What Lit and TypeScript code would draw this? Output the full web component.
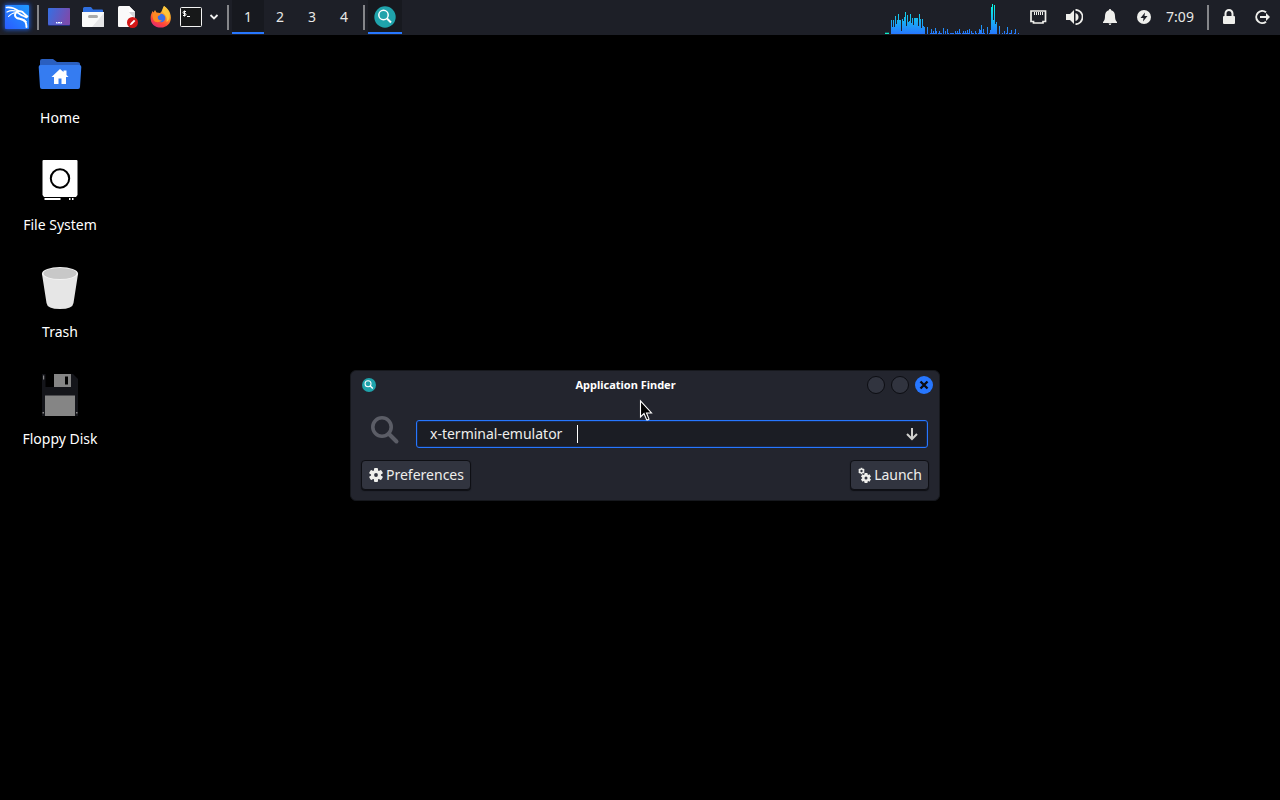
import { LitElement, html, svg, css } from "lit";
import { customElement, property } from "lit/decorators.js";

const icons: Record<string, unknown> = {
  kali: svg`<svg width="34" height="34" viewBox="0 0 34 34">
    <defs>
      <linearGradient id="k" x1="0" y1="1" x2="1" y2="0"><stop offset="0" stop-color="#2a5cff"/><stop offset="1" stop-color="#1f9bff"/></linearGradient>
      <filter id="g" x="-30%" y="-30%" width="160%" height="160%"><feGaussianBlur stdDeviation="2"/></filter>
    </defs>
    <rect x="4" y="4" width="26" height="26" rx="2" fill="#1c5fe8" opacity=".8" filter="url(#g)"/>
    <rect x="5" y="5" width="24" height="24" rx="1" fill="url(#k)"/>
    <g fill="none" stroke="#fff" stroke-linecap="round" stroke-linejoin="round">
      <path d="M6.500 7.500c4-.5 8 .5 12 3.500" stroke-width="1.700"/>
      <path d="M7 12c3-1.500 7-1.500 10-.5" stroke-width="1.300"/>
      <path d="M8.500 16.500c2-2.500 4-3.500 7.500-4" stroke-width="1.100"/>
      <path d="M17 11.500c3-1 6 0 7.500 2.500l3 2.500-1 1-3-1.500c-2-.5-4-2-6-3.500" stroke-width="1.700"/>
      <path d="M17 12c-2.500 1.500-3 4.500 0 6 3 1.200 6.500 1 8.500 4 .8 2 1 3.500 1 5" stroke-width="2"/>
      <path d="M19 18.500c4 .5 6 1 7.500 3" stroke-width="1"/>
    </g></svg>`,
  desktop: svg`<svg width="22" height="18" viewBox="0 0 22 18">
    <defs><linearGradient id="d" x1="0" y1="0" x2="1" y2=".3"><stop offset="0" stop-color="#3470e4"/><stop offset="1" stop-color="#7a4cae"/></linearGradient></defs>
    <rect width="22" height="18" rx="1" fill="#20307c"/><rect width="22" height="17" rx="1" fill="url(#d)"/>
    <path d="M8 14h6v2h-6z" fill="#8b9df2"/><path d="M8 14h1v1h-1zM10 14h2v1h-2zM13 14h1v1h-1z" fill="#fff"/></svg>`,
  files: svg`<svg width="22" height="20" viewBox="0 0 22 20">
    <path d="M1 5V1.500Q1 0 2.500 0H9l2 2.500h9q1 0 1 1V6H1z" fill="#2f6fe0"/>
    <path d="M0 5h22v14q0 1-1 1H1q-1 0-1-1z" fill="#fafafa"/><path d="M22 6v13q0 1-1 1H10z" fill="#e6e6e8"/>
    <rect x="6" y="8" width="10" height="3" rx="1.500" fill="#aaa"/></svg>`,
  editor: svg`<svg width="22" height="24" viewBox="-1 0 22 24">
    <path d="M1 2.500Q1 1 2.500 1H12l6 6v14q0 1-1 1H2q-1 0-1-1z" fill="#fafafa"/><path d="M12 1l6 6v7l-6-7z" fill="#d5d5d8"/><path d="M12 1l6 6h-6z" fill="#fff"/>
    <circle cx="15.500" cy="17.500" r="5.500" fill="#d41616"/><path d="M12.700 20.300l1-2.300 3.300-3.300 1.400 1.400-3.400 3.300z" fill="#fff"/></svg>`,
  firefox: svg`<svg width="22" height="22" viewBox="0 0 22 22">
    <defs><linearGradient id="f" x1=".8" y1="0" x2=".3" y2="1"><stop offset="0" stop-color="#ffe14a"/><stop offset=".4" stop-color="#ff9a26"/><stop offset=".75" stop-color="#ff4438"/><stop offset="1" stop-color="#e32b72"/></linearGradient></defs>
    <path d="M14 0c3 2 5 4 6 7 3 8-2 14.500-9 14.500S0 17 .7 10.500C1 8 2 7 2.500 5l1 1.500L5 4l1.500 2.500L10 7c2-1 2-4 4-7z" fill="url(#f)"/>
    <circle cx="11" cy="12" r="4.300" fill="#3b6fe8"/>
    <path d="M3 7l7 .5c1 1 0 2-2 2.500-1 3 1 5 4 4-2 3-7 3-8.500 0C2.500 12 2 9 3 7z" fill="#ff8a22"/>
    <path d="M14 0c2 2 5 5 5.500 10 .2 3-1 5-3 6 1-4-.5-7-4-10 0-2 .5-4 1.500-6z" fill="#ffc53a"/></svg>`,
  terminal: svg`<svg width="22" height="20" viewBox="0 0 22 20"><rect x=".5" y=".5" width="21" height="19" rx="1" fill="#171819" stroke="#f4f4f4"/>
    <path d="M6 4.500H4q-1 0-1 1t1 1h1q1 0 1 1t-1 1H3M4.500 3.500v6M7 9.500h3" fill="none" stroke="#fff"/></svg>`,
  chevron: svg`<svg width="10" height="6" viewBox="0 0 10 6"><path d="M1.500 1L5 4.500 8.500 1" fill="none" stroke="#f0f0f0" stroke-width="1.800"/></svg>`,
  finder: svg`<svg width="22" height="22" viewBox="0 0 22 22"><circle cx="11" cy="11" r="10.700" fill="#1fa3ab"/><circle cx="9.500" cy="9" r="4.700" fill="none" stroke="#fff" stroke-width="1.500"/><path d="M13 12.500l4 4" stroke="#fff" stroke-width="2"/></svg>`,
  finderSmall: svg`<svg width="14" height="14" viewBox="0 0 22 22"><circle cx="11" cy="11" r="11" fill="#1fa3ab"/><circle cx="9.500" cy="9" r="4.700" fill="none" stroke="#fff" stroke-width="1.600"/><path d="M13 12.500l4 4" stroke="#fff" stroke-width="2.200"/></svg>`,
  ethernet: svg`<svg width="17" height="14" viewBox="0 0 17 14"><path d="M1 1h14.500v10.500h-2.500v1.500H3.500v-1.500H1z" fill="none" stroke="#efefec" stroke-width="1.700"/><path d="M4.500 2v3M6.500 2v3M8.500 2v3M10.500 2v3M12.500 2v3" stroke="#efefec" stroke-width="1"/></svg>`,
  speaker: svg`<svg width="18" height="16" viewBox="0 0 18 16"><path d="M1 5h4l4-4v14l-4-4H1z" fill="#efefec"/><path d="M10.500 4q3 1 3 4t-3 4z" fill="#efefec"/><path d="M10.500 .8a7 7.200 0 0 1 0 14.400" fill="none" stroke="#efefec" stroke-width="1.700"/></svg>`,
  bell: svg`<svg width="14" height="16" viewBox="0 0 14 16"><path d="M7 0q1.200 0 1.200 1.300Q12 2.500 12 7q0 4.500 2 6v1H0v-1q2-1.500 2-6 0-4.500 3.800-5.700Q5.800 0 7 0zM5.500 14.500h3L7.500 16h-1z" fill="#efefec"/></svg>`,
  power: svg`<svg width="14" height="14" viewBox="0 0 14 14"><circle cx="7" cy="7" r="7" fill="#efefec"/><path d="M8 2.500L3.500 8H6.500L6 11.500 10.500 6H7.500z" fill="#1d1f27"/></svg>`,
  lock: svg`<svg width="14" height="16" viewBox="0 0 14 16"><path d="M3.500 8V4.500a3.300 3.300 0 0 1 7 0V8" fill="none" stroke="#efefec" stroke-width="2"/><rect x="1" y="7" width="12" height="8" rx="1" fill="#efefec"/></svg>`,
  logout: svg`<svg width="18" height="16" viewBox="0 0 18 16"><path d="M12 3.300a6 6 0 1 0 0 9.400" fill="none" stroke="#efefec" stroke-width="2"/><path d="M6 7h6V4l4 4-4 4V9H6z" fill="#efefec"/></svg>`,
  home: svg`<svg width="44" height="48" viewBox="0 0 44 48"><path d="M2 10q0-2 2-2h11l4 3h20q3 0 3 2v4H2z" fill="#2a5fc0"/>
    <path d="M.7 16q-.2-2 2-2h38.600q2.200 0 2 2L42 36q0 2-2 2H4q-2 0-2-2z" fill="#357cf1"/>
    <path d="M22 18l3.500 3V19.500h3V24l2 2H28v7h-4.500v-5.500h-3V33H16v-7h-2.500z" fill="#fff"/></svg>`,
  drive: svg`<svg width="44" height="48" viewBox="0 0 44 48"><path d="M5.500 2h33q1 0 1 1v34l-1.500 2H6l-1.500-2V3q0-1 1-1z" fill="#fff"/><circle cx="22" cy="20.500" r="9.200" fill="none" stroke="#000" stroke-width="2"/>
    <path d="M6.500 40h16v2h-16zM31 40h1.500v2H31zM34 40h1.500v2H34z" fill="#fff"/></svg>`,
  trash: svg`<svg width="44" height="48" viewBox="0 0 44 48"><path d="M4 9L8.500 38q.7 6 13.500 6t13.500-6L40 9z" fill="#e6e6e6"/><ellipse cx="22" cy="8.500" rx="18" ry="6.500" fill="#f2f2f2"/><ellipse cx="22" cy="8.500" rx="16.500" ry="5.500" fill="#c8c8c8"/></svg>`,
  floppy: svg`<svg width="44" height="48" viewBox="0 0 44 48"><path d="M4 2h31l5 5v37H4z" fill="#14151a"/><path d="M7.500 2H16v13H7.500z" fill="#000"/><path d="M16 2h17v13H16z" fill="#858585"/><path d="M27 4.500h3v8h-3z" fill="#000"/><path d="M7 23.500h30V44H7z" fill="#858585"/><path d="M5 3.500h1.200v4H5zM4.500 40h1.500v1.500H4.500zM38 40h1.500v1.500H38z" fill="#888"/></svg>`,
  search: svg`<svg width="30" height="30" viewBox="0 0 30 30"><circle cx="12" cy="12" r="9.200" fill="none" stroke="#5b5d66" stroke-width="3.600"/><path d="M19 19l7.500 7.500" stroke="#5b5d66" stroke-width="4" stroke-linecap="round"/></svg>`,
  down: svg`<svg width="12" height="14" viewBox="0 0 12 14"><path d="M6 1v11M1 7l5 5 5-5" fill="none" stroke="#d0d0ce" stroke-width="2"/></svg>`,
  gear: svg`<svg width="14" height="14" viewBox="-7 -7 14 14"><g fill="#efefec"><circle r="5"/>${[0, 60, 120].map((a) => svg`<rect x="-2" y="-7" width="4" height="14" rx="1" transform="rotate(${a})"/>`)}</g><circle r="1.900" fill="#31343f"/></svg>`,
  gears: svg`<svg width="13" height="16" viewBox="0 0 13 16"><g transform="translate(8 11)"><g fill="#efefec"><circle r="3.800"/>${[0, 60, 120].map((a) => svg`<rect x="-1.500" y="-5" width="3" height="10" transform="rotate(${a})"/>`)}</g><circle r="1.500" fill="#31343f"/></g>
    <g transform="translate(3.500 4)"><g fill="#efefec"><circle r="2.400"/>${[0, 60, 120].map((a) => svg`<rect x="-.9" y="-3.200" width="1.800" height="6.400" transform="rotate(${a})"/>`)}</g><circle r="1.200" fill="#31343f"/></g></svg>`,
  close: svg`<svg width="18" height="18" viewBox="0 0 18 18"><path d="M5.500 5.500l7 7M12.500 5.500l-7 7" stroke="#0c0d12" stroke-width="2.400"/></svg>`,
};

/* Load samples per one-pixel column, oldest first. */
const load = [
  14, 7, 14, 7, 18, 10, 14, 20, 14, 14, 3, 15, 13, 17, 22, 8, 19, 12, 13, 20, 11, 16, 9, 16, 16, 16, 16, 8, 20, 15, 6, 15, 8, 7,
  0, 0, 7, 0, 0, 1, 5, 1, 3, 1, 6, 3, 0, 1, 3, 1, 1, 0, 6, 0, 3, 0, 5, 1, 0, 1, 1, 1, 1, 0, 3, 1, 3, 1, 5, 1, 0, 1, 3, 1, 3, 1, 4,
  1, 5, 0, 3, 1, 1, 0, 3, 1, 0, 1, 5, 4, 9, 1, 5, 1, 0, 0, 7, 0, 1, 4, 27, 30, 14, 29, 10, 12, 0, 0, 8, 0, 0, 1, 0, 3, 0, 1, 7,
  0, 1, 1, 4, 0, 0, 1, 5, 0, 0, 1,
];

@customElement("load-graph")
export class LoadGraph extends LitElement {
  static styles = css`
    :host { display: block; }
    svg { display: block; }
  `;
  render() {
    return html`<svg width="135" height="34" viewBox="0 0 135 34" shape-rendering="crispEdges" role="img" aria-label="CPU load">
      <defs><linearGradient id="bar" gradientUnits="userSpaceOnUse" x1="0" y1="34" x2="0" y2="4">
        <stop offset="0" stop-color="#2777ff"/><stop offset="1" stop-color="#06fbe0"/></linearGradient></defs>
      <path d="M0 32h4v1H0z" fill="#12585a"/><path d="M0 33h4v1H0z" fill="#0ff0c8"/>
      <path fill="url(#bar)" d=${load.map((h, i) => (h ? `M${i + 6} ${34 - h}h1v${h}h-1z` : "")).join("")}></path>
    </svg>`;
  }
}

@customElement("desktop-icon")
export class DesktopIcon extends LitElement {
  @property() name = "";
  @property() icon = "";
  static styles = css`
    button {
      display: flex; flex-direction: column; align-items: center; gap: 8px;
      width: 100%; padding: 0; border: 0; background: none; color: #fff;
      font: 14px/22px "Noto Sans", sans-serif;
    }
    svg { display: block; }
  `;
  render() {
    return html`<button type="button">${icons[this.icon]}<span>${this.name}</span></button>`;
  }
}

@customElement("top-panel")
export class TopPanel extends LitElement {
  static styles = css`
    :host { display: flex; height: 35px; background: #1d1f27; color: #e8e8e6; font: 14px/34px "Noto Sans", sans-serif; }
    button {
      display: flex; align-items: center; justify-content: center; box-sizing: border-box;
      width: 34px; height: 34px; padding: 0; border: 0; background: none; color: inherit; font: inherit;
    }
    svg { display: block; }
    nav, .tray { display: flex; }
    .tray { margin-left: auto; }
    .narrow { width: 26px; }
    .menu { width: 20px; }
    .space { width: 32px; }
    .status { width: 36px; }
    .battery { width: 32px; }
    .clock { width: 40px; }
    .session { margin-left: 4px; }
    .current { background: #17191f; border-bottom: 2px solid #2777ff; padding-top: 2px; }
    .rule { width: 2px; height: 25px; margin: 5px 3px; background: #85868a; }
    .wide { margin: 5px 7px; }
  `;
  private launcher(icon: string, label: string, cls = "") {
    return html`<button type="button" class=${cls} aria-label=${label}>${icons[icon]}</button>`;
  }
  render() {
    return html`
      <nav aria-label="Launchers">
        ${this.launcher("kali", "Applications")}
        <span class="rule"></span>
        ${this.launcher("desktop", "Show desktop")} ${this.launcher("files", "Files")}
        ${this.launcher("editor", "Text editor")} ${this.launcher("firefox", "Firefox")}
        ${this.launcher("terminal", "Terminal", "narrow")} ${this.launcher("chevron", "More terminals", "menu")}
      </nav>
      <span class="rule"></span>
      <nav aria-label="Workspaces">
        ${[1, 2, 3, 4].map((n) => html`<button type="button" class=${n === 1 ? "space current" : "space"}>${n}</button>`)}
      </nav>
      <span class="rule"></span>
      ${this.launcher("finder", "Application Finder", "current")}
      <div class="tray">
        <load-graph></load-graph>
        ${this.launcher("ethernet", "Network", "status")} ${this.launcher("speaker", "Volume", "status")}
        ${this.launcher("bell", "Notifications", "status")} ${this.launcher("power", "Power", "battery")}
        <button type="button" class="clock">7:09</button>
        <span class="rule wide"></span>
        ${this.launcher("lock", "Lock screen", "narrow")} ${this.launcher("logout", "Log out", "session")}
      </div>
    `;
  }
}

@customElement("finder-window")
export class FinderWindow extends LitElement {
  static styles = css`
    :host {
      display: block; box-sizing: border-box; border: 1px solid #16181d; border-radius: 6px;
      background: #23252e; color: #eeeeec; font: 14px/22px "Noto Sans", sans-serif;
    }
    svg { display: block; }
    button { padding: 0; color: inherit; font: inherit; }
    header { display: flex; align-items: center; height: 28px; padding: 0 6px 0 11px; }
    h1 { flex: 1; margin: 0; padding-left: 8px; text-align: center; font-size: 11px; line-height: 18px; font-weight: 700; color: #fff; }
    .controls { display: flex; gap: 6px; }
    .round {
      display: flex; align-items: center; justify-content: center; width: 18px; height: 18px; box-sizing: border-box;
      border: 1px solid #0c0d12; border-radius: 50%; background: #31343f;
    }
    .close { border: 0; background: #2777ff; }
    .row { display: flex; align-items: center; padding: 21px 11px 0 19px; }
    .glass { width: 30px; margin: -8px 16px 0 0; }
    .entry {
      position: relative; flex: 1; display: flex; align-items: center; box-sizing: border-box; height: 28px;
      border: 1px solid #2777ff; border-radius: 3px; background: #1b1d24; box-shadow: inset 0 0 0 1px #18294d;
    }
    input {
      flex: 1; min-width: 0; height: 26px; box-sizing: border-box; padding: 0 0 2px 13px; border: 0; outline: 0;
      background: none; color: #eeeeec; font: inherit;
    }
    .drop { width: 30px; height: 26px; display: flex; align-items: center; justify-content: center; border: 0; background: none; }
    .caret { position: absolute; left: 160px; top: 4px; width: 1px; height: 18px; background: #fff; }
    footer { display: flex; justify-content: space-between; padding: 12px 10px 10px; }
    .action {
      display: flex; align-items: center; gap: 3px; height: 30px; box-sizing: border-box; padding: 0 6px 0 7px;
      border: 1px solid #0e0f14; border-radius: 4px; background: #31343f; box-shadow: 0 1px 1px #0e0f14;
    }
  `;
  render() {
    return html`
      <header>
        ${icons.finderSmall}
        <h1>Application Finder</h1>
        <div class="controls">
          <button class="round" type="button" aria-label="Minimize"></button>
          <button class="round" type="button" aria-label="Maximize"></button>
          <button class="round close" type="button" aria-label="Close">${icons.close}</button>
        </div>
      </header>
      <div class="row">
        <label class="glass" for="command" aria-label="Command">${icons.search}</label>
        <div class="entry">
          <input id="command" type="text" .value=${"x-terminal-emulator"} spellcheck="false" />
          <span class="caret"></span>
          <button class="drop" type="button" aria-label="Show all">${icons.down}</button>
        </div>
      </div>
      <footer>
        <button class="action" type="button">${icons.gear}<span>Preferences</span></button>
        <button class="action" type="button">${icons.gears}<span>Launch</span></button>
      </footer>
    `;
  }
}

@customElement("app-root")
export class AppRoot extends LitElement {
  static styles = css`
    :host { position: relative; display: flex; flex-direction: column; min-height: 100vh; background: #000; overflow: hidden; }
    .icons { display: flex; flex-direction: column; gap: 29px; width: 120px; padding-top: 16px; }
    .window { position: absolute; left: 350px; top: 370px; width: 590px; }
    .pointer { position: absolute; left: 639px; top: 399px; }
  `;
  render() {
    return html`
      <top-panel></top-panel>
      <main class="icons">
        <desktop-icon name="Home" icon="home"></desktop-icon>
        <desktop-icon name="File System" icon="drive"></desktop-icon>
        <desktop-icon name="Trash" icon="trash"></desktop-icon>
        <desktop-icon name="Floppy Disk" icon="floppy"></desktop-icon>
      </main>
      <finder-window class="window"></finder-window>
      <svg class="pointer" width="14" height="23" viewBox="0 0 14 23" aria-hidden="true">
        <path d="M1.500 2v16l3.500-3.500 2.500 6q1 1 2.500-.5L7.500 14h5z" fill="#000" stroke="#fff" stroke-width="1.100"/>
      </svg>
    `;
  }
}
